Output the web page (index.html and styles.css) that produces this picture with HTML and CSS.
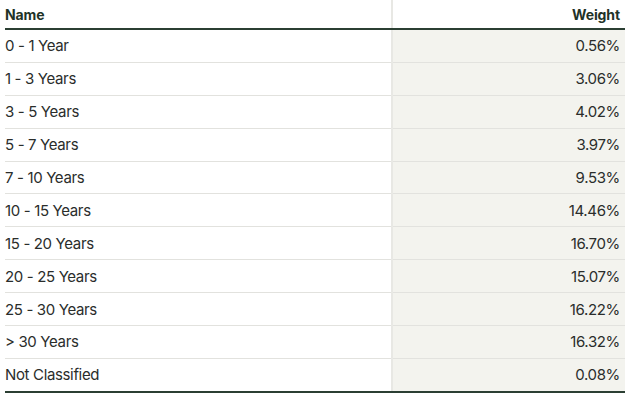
FILE: index.html
```html
<!DOCTYPE html>
<html>
<head>
<meta charset="utf-8">
<link rel="stylesheet" href="styles.css">
</head>
<body>
<table class="tbl">
  <thead>
    <tr><th class="c-name">Name</th><th class="c-weight">Weight</th></tr>
  </thead>
  <tbody>
    <tr><td class="c-name">0 - 1 Year</td><td class="c-weight">0.56%</td></tr>
    <tr><td class="c-name">1 - 3 Years</td><td class="c-weight">3.06%</td></tr>
    <tr><td class="c-name">3 - 5 Years</td><td class="c-weight">4.02%</td></tr>
    <tr><td class="c-name">5 - 7 Years</td><td class="c-weight">3.97%</td></tr>
    <tr><td class="c-name">7 - 10 Years</td><td class="c-weight">9.53%</td></tr>
    <tr><td class="c-name">10 - 15 Years</td><td class="c-weight">14.46%</td></tr>
    <tr><td class="c-name">15 - 20 Years</td><td class="c-weight">16.70%</td></tr>
    <tr><td class="c-name">20 - 25 Years</td><td class="c-weight">15.07%</td></tr>
    <tr><td class="c-name">25 - 30 Years</td><td class="c-weight">16.22%</td></tr>
    <tr><td class="c-name">&gt; 30 Years</td><td class="c-weight">16.32%</td></tr>
    <tr><td class="c-name">Not Classified</td><td class="c-weight">0.08%</td></tr>
  </tbody>
</table>
</body>
</html>
```

FILE: styles.css
```css
html, body {
  margin: 0;
  padding: 0;
  background: #ffffff;
}
body {
  padding-left: 5px;
  font-family: "Inter", "Liberation Sans", sans-serif;
  color: #2a2d2b;
}
.tbl {
  width: 620px;
  border-collapse: collapse;
  table-layout: fixed;
}
.tbl th {
  height: 28px;
  padding: 0;
  font-size: 14px;
  font-weight: 700;
  letter-spacing: -0.1px;
  color: #1f3328;
  border-bottom: 2px solid #2b3f33;
  vertical-align: middle;
}
.tbl td {
  height: 31.9px;
  padding: 0;
  font-size: 15px;
  font-weight: 400;
  letter-spacing: -0.35px;
  border-bottom: 1px solid #e2e2de;
  vertical-align: middle;
}
.tbl tbody tr:last-child td {
  border-bottom: 2px solid #2b3f33;
}
.c-name {
  width: 386px;
  text-align: left;
}
.c-weight {
  text-align: right;
  padding-right: 5px !important;
  border-left: 2px solid #e8e8e4;
}
td.c-weight {
  background: #f3f3ee;
}
```
